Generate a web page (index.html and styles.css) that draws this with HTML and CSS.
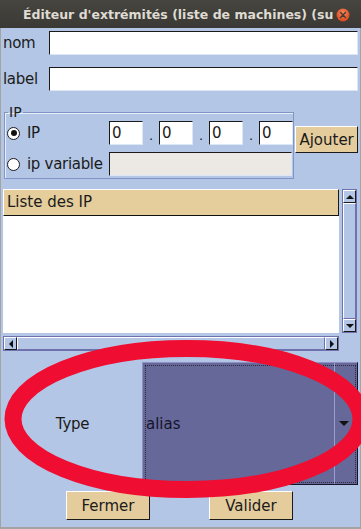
FILE: index.html
```html
<!DOCTYPE html>
<html lang="fr">
<head>
    <meta charset="UTF-8">
    <meta name="viewport" content="width=device-width, initial-scale=1.0">
    <title>Éditeur d'extrémités</title>
    <link rel="stylesheet" href="styles.css">
</head>
<body>
    <div class="window">
        <div class="titlebar">
            <span class="title">Éditeur d'extrémités (liste de machines) (su</span>
            <svg class="close" width="14" height="14" viewBox="0 0 14 14">
                <defs>
                    <radialGradient id="closeGrad" cx="50%" cy="35%" r="65%">
                        <stop offset="0" stop-color="#f7895a"/>
                        <stop offset="1" stop-color="#d9441a"/>
                    </radialGradient>
                </defs>
                <circle cx="7" cy="7" r="6.5" fill="url(#closeGrad)"/>
                <path d="M4.6 4.6 L9.4 9.4 M9.4 4.6 L4.6 9.4" stroke="#4a3b33" stroke-width="1.4" stroke-linecap="round"/>
            </svg>
        </div>

        <div class="content">
            <div class="field-row">
                <label>nom</label>
                <input class="text" type="text">
            </div>
            <div class="field-row">
                <label>label</label>
                <input class="text" type="text">
            </div>

            <div class="ip-row">
                <fieldset class="ip-box">
                    <legend>IP</legend>
                    <div class="ip-line">
                        <div class="choice"><span class="radio checked"></span>IP</div>
                        <div class="octets">
                            <input class="text octet" type="text" value="0">
                            <span class="dot">.</span>
                            <input class="text octet" type="text" value="0">
                            <span class="dot">.</span>
                            <input class="text octet" type="text" value="0">
                            <span class="dot">.</span>
                            <input class="text octet" type="text" value="0">
                        </div>
                    </div>
                    <div class="ip-line">
                        <div class="choice"><span class="radio"></span>ip variable</div>
                        <input class="text var-field" type="text" disabled>
                    </div>
                </fieldset>
                <button class="btn add">Ajouter</button>
            </div>

            <div class="list-pane">
                <div class="viewport">
                    <div class="list-header">Liste des IP</div>
                </div>
                <div class="vscroll">
                    <span class="arrow"><span class="tri up"></span></span>
                    <span class="thumb"></span>
                    <span class="arrow"><span class="tri down"></span></span>
                </div>
                <div class="hscroll">
                    <span class="arrow"><span class="tri left"></span></span>
                    <span class="thumb"></span>
                    <span class="arrow"><span class="tri right"></span></span>
                </div>
            </div>

            <div class="type-row">
                <span class="type-label">Type</span>
                <div class="combo">
                    <span class="combo-value">alias</span>
                    <span class="combo-btn"><span class="tri down"></span></span>
                </div>
            </div>

            <div class="actions">
                <button class="btn">Fermer</button>
                <button class="btn">Valider</button>
            </div>
        </div>

        <svg class="highlight" width="361" height="529" viewBox="0 0 361 529">
            <ellipse cx="187" cy="419" rx="174" ry="70.5" fill="none" stroke="#ef0e31" stroke-width="17"/>
        </svg>
    </div>
</body>
</html>
```

FILE: styles.css
```css
* {
    box-sizing: border-box;
}

body {
    margin: 0;
    font-family: "DejaVu Sans", sans-serif;
    font-size: 15px;
    color: #1b1b1b;
}

.window {
    position: relative;
    width: 361px;
    height: 529px;
    overflow: hidden;
    background-color: #b3c6e5;
}

/* barre de titre */
.titlebar {
    height: 28px;
    display: flex;
    align-items: flex-start;
    background: linear-gradient(#46453f, #3a3935);
}

.title {
    width: 310px;
    margin-left: 23px;
    white-space: nowrap;
    font-size: 12.5px;
    font-weight: bold;
    line-height: 28px;
    padding-top: 1px;
    color: #dfdbd2;
}

.close {
    margin: 8px 0 0 3px;
}

.content {
    height: 501px;
    padding: 3px 2px 0 2px;
    border-left: 1px solid #a3a3a3;
    border-right: 1px solid #a3a3a3;
    border-bottom: 2px solid #a3a3a3;
}

/* champs texte */
.text {
    height: 24px;
    margin: 0;
    padding: 0 2px;
    font-family: inherit;
    font-size: 15px;
    color: #1b1b1b;
    background-color: #fff;
    border: 1px solid;
    border-color: #1a1a1a #dce6f4 #dce6f4 #1a1a1a;
    outline: none;
}

.field-row {
    display: flex;
    align-items: center;
    margin-bottom: 12px;
}

.field-row label {
    width: 46px;
    letter-spacing: -0.3px;
}

.field-row .text {
    flex: 1;
}

/* bloc IP */
.ip-row {
    display: flex;
    align-items: flex-start;
}

.ip-box {
    width: 291px;
    margin: 0 0 0 1px;
    padding: 0 0 2px 0;
    min-width: 0;
    border: 1px solid #8094c6;
    box-shadow: inset 1px 1px 0 #e8eef8;
}

.ip-box legend {
    margin-left: 3px;
    padding: 0 1px;
    font-size: 14px;
    line-height: 18px;
}

.ip-line {
    display: flex;
    align-items: center;
    height: 24px;
}

.ip-line + .ip-line {
    margin-top: 7px;
}

.choice {
    width: 104px;
    display: flex;
    align-items: center;
    padding-left: 2px;
    letter-spacing: -0.3px;
}

.radio {
    width: 13px;
    height: 13px;
    margin-right: 7px;
    border: 1px solid #1a1a1a;
    border-radius: 50%;
    background-color: #fff;
    display: flex;
    align-items: center;
    justify-content: center;
}

.radio.checked::after {
    content: "";
    width: 6px;
    height: 6px;
    border-radius: 50%;
    background-color: #111;
}

.octets {
    display: flex;
    align-items: center;
}

.octet {
    width: 34px;
}

.dot {
    width: 16px;
    text-align: center;
    font-size: 13px;
    padding-top: 4px;
}

.var-field {
    width: 183px;
    background-color: #ece9e4;
}

/* boutons */
.btn {
    margin: 0;
    padding: 0;
    font-family: inherit;
    font-size: 15px;
    color: #1b1b1b;
    background-color: #e5cc9c;
    border: 1px solid;
    border-color: #fff #1a1a1a #1a1a1a #fff;
}

.add {
    width: 63px;
    height: 27px;
    margin: 23px 0 0 1px;
}

/* liste */
.list-pane {
    display: grid;
    grid-template-columns: 336px 15px;
    grid-template-rows: 144px 15px;
    column-gap: 3px;
    row-gap: 3px;
    margin-top: 10px;
}

.viewport {
    background-color: #fff;
}

.list-header {
    height: 27px;
    padding: 2px 0 0 3px;
    background-color: #e5cd9c;
    border: 1px solid;
    border-color: #fff #1a1a1a #111 #fff;
    line-height: 21px;
}

.vscroll,
.hscroll {
    display: flex;
    border: 1px solid #6e71ad;
}

.vscroll {
    flex-direction: column;
}

.arrow {
    width: 13px;
    height: 13px;
    flex-shrink: 0;
    display: flex;
    align-items: center;
    justify-content: center;
    border: 1px solid;
    border-color: #fff #1a1a1a #1a1a1a #fff;
}

.thumb {
    flex: 1;
    border: 1px solid;
    border-color: #fff #6e71ad #6e71ad #fff;
}

.tri {
    width: 0;
    height: 0;
    border: 4px solid transparent;
}

.tri.up {
    border-bottom-color: #111;
    border-top-width: 0;
}

.tri.down {
    border-top-color: #111;
    border-bottom-width: 0;
}

.tri.left {
    border-right-color: #111;
    border-left-width: 0;
}

.tri.right {
    border-left-color: #111;
    border-right-width: 0;
}

/* type */
.type-row {
    display: flex;
    align-items: center;
    margin-top: 11px;
}

.type-label {
    width: 139px;
    text-align: center;
    letter-spacing: -0.3px;
}

.combo {
    position: relative;
    width: 216px;
    height: 123px;
    display: flex;
    align-items: center;
    background-color: #66689a;
    border: 1px solid;
    border-color: #8f91c3 #151528 #151528 #8f91c3;
}

.combo::after {
    content: "";
    position: absolute;
    top: 2px;
    left: 2px;
    right: 1px;
    bottom: 1px;
    border: 1px dotted #2a2a3a;
}

.combo-value {
    flex: 1;
    padding-left: 3px;
    padding-top: 1px;
    color: #15152a;
}

.combo-btn {
    width: 23px;
    height: 100%;
    padding-right: 4px;
    display: flex;
    align-items: center;
    justify-content: center;
    border-left: 1px solid #9c9ed0;
}

.combo-btn .tri {
    border-width: 5px 5px 0 5px;
    border-top-color: #111;
}

.actions {
    display: flex;
    gap: 59px;
    margin-top: 6px;
    padding-left: 63px;
}

.actions .btn {
    width: 84px;
    height: 29px;
}

/* cercle rouge par-dessus */
.highlight {
    position: absolute;
    top: 0;
    left: 0;
    pointer-events: none;
}
```
